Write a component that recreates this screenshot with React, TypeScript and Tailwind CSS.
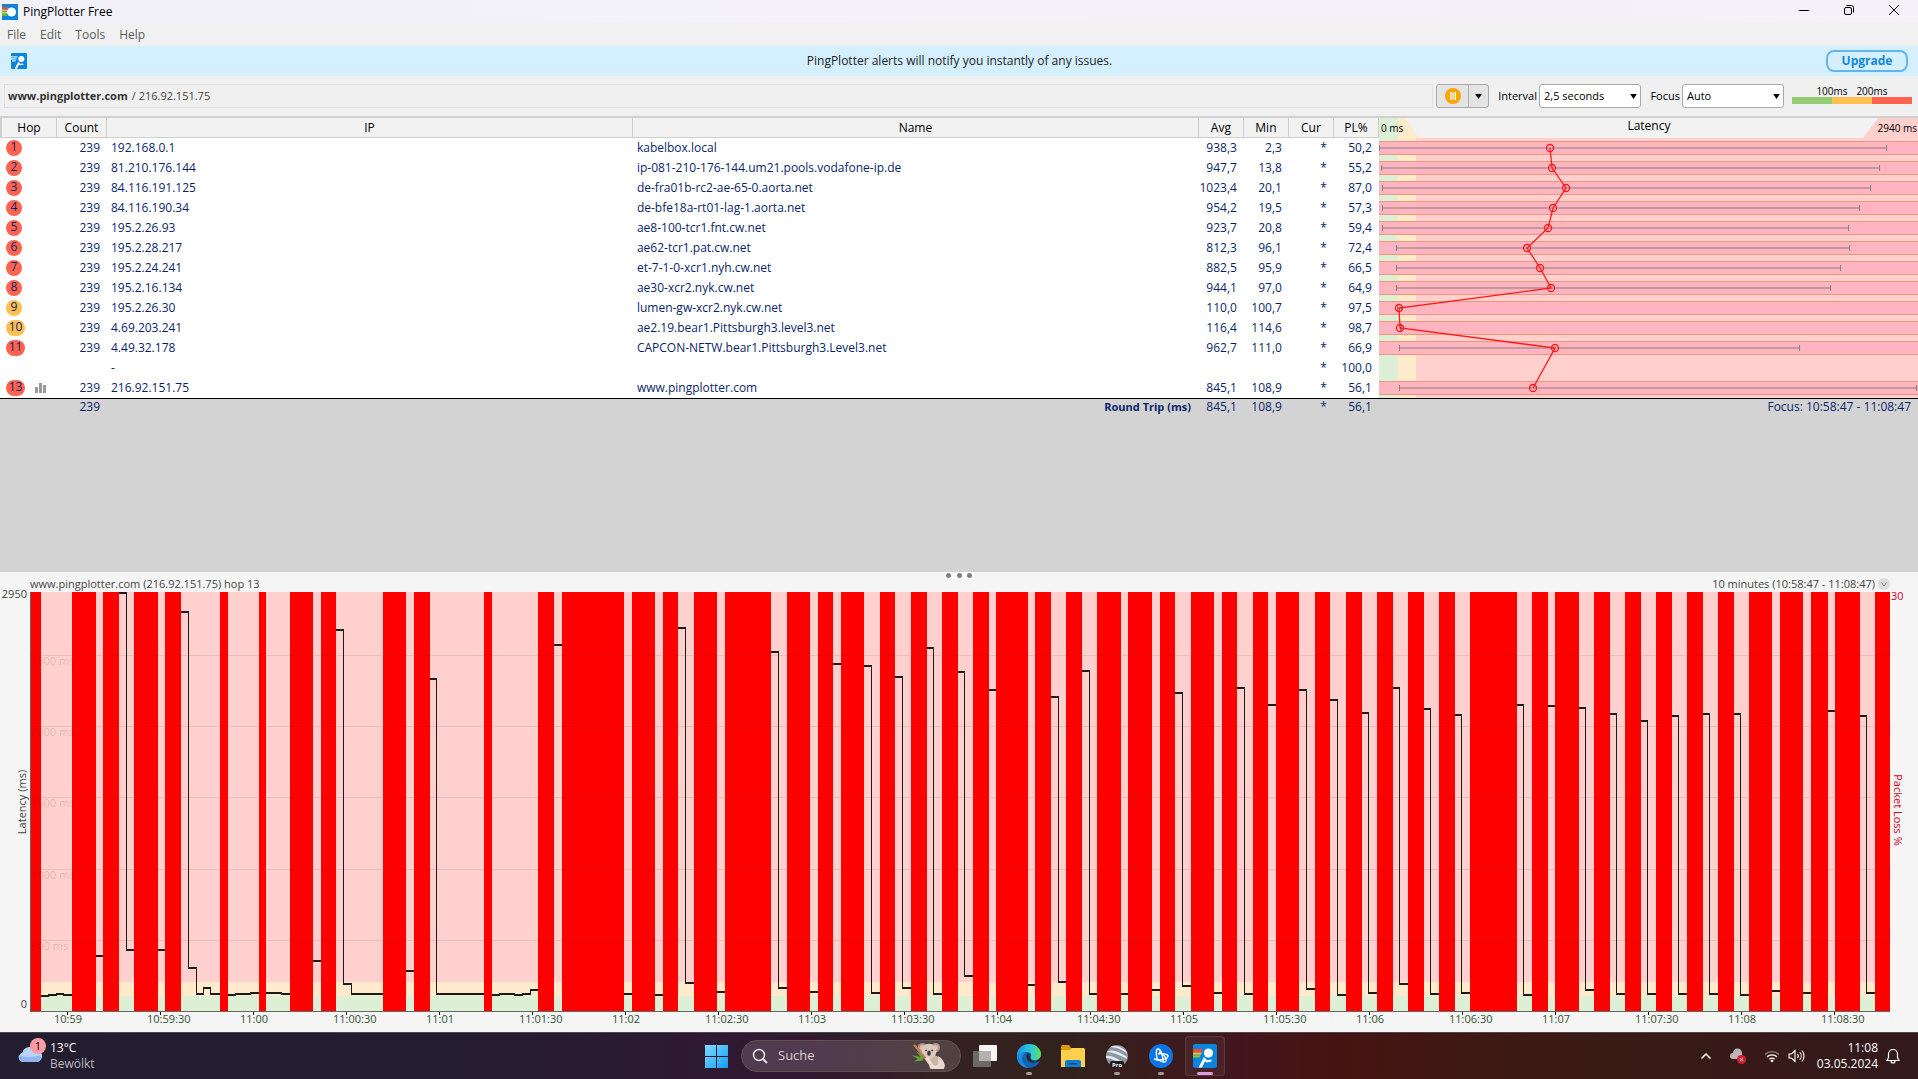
import React from "react";
import clsx from "clsx";

interface Hop {
  hop: number | null;
  count?: number;
  ip: string;
  name?: string;
  avg?: string;
  min?: string;
  loss: string;
  warn?: boolean;
  active?: boolean;
  // graph positions, in pixels of the latency column
  lo?: number;
  hi?: number;
  mid?: number;
}

const HOPS: Hop[] = [
  { hop: 1, count: 239, ip: "192.168.0.1", name: "kabelbox.local", avg: "938,3", min: "2,3", loss: "50,2", lo: 0, hi: 507, mid: 171 },
  { hop: 2, count: 239, ip: "81.210.176.144", name: "ip-081-210-176-144.um21.pools.vodafone-ip.de", avg: "947,7", min: "13,8", loss: "55,2", lo: 2, hi: 500, mid: 173 },
  { hop: 3, count: 239, ip: "84.116.191.125", name: "de-fra01b-rc2-ae-65-0.aorta.net", avg: "1023,4", min: "20,1", loss: "87,0", lo: 3, hi: 491, mid: 187 },
  { hop: 4, count: 239, ip: "84.116.190.34", name: "de-bfe18a-rt01-lag-1.aorta.net", avg: "954,2", min: "19,5", loss: "57,3", lo: 3, hi: 480, mid: 174 },
  { hop: 5, count: 239, ip: "195.2.26.93", name: "ae8-100-tcr1.fnt.cw.net", avg: "923,7", min: "20,8", loss: "59,4", lo: 3, hi: 469, mid: 169 },
  { hop: 6, count: 239, ip: "195.2.28.217", name: "ae62-tcr1.pat.cw.net", avg: "812,3", min: "96,1", loss: "72,4", lo: 17, hi: 470, mid: 148 },
  { hop: 7, count: 239, ip: "195.2.24.241", name: "et-7-1-0-xcr1.nyh.cw.net", avg: "882,5", min: "95,9", loss: "66,5", lo: 17, hi: 461, mid: 161 },
  { hop: 8, count: 239, ip: "195.2.16.134", name: "ae30-xcr2.nyk.cw.net", avg: "944,1", min: "97,0", loss: "64,9", lo: 17, hi: 451, mid: 172 },
  { hop: 9, count: 239, ip: "195.2.26.30", name: "lumen-gw-xcr2.nyk.cw.net", avg: "110,0", min: "100,7", loss: "97,5", warn: true, lo: 18, hi: 22, mid: 20 },
  { hop: 10, count: 239, ip: "4.69.203.241", name: "ae2.19.bear1.Pittsburgh3.level3.net", avg: "116,4", min: "114,6", loss: "98,7", warn: true, lo: 21, hi: 22, mid: 21 },
  { hop: 11, count: 239, ip: "4.49.32.178", name: "CAPCON-NETW.bear1.Pittsburgh3.Level3.net", avg: "962,7", min: "111,0", loss: "66,9", lo: 20, hi: 420, mid: 176 },
  { hop: null, ip: "-", loss: "100,0" },
  { hop: 13, count: 239, ip: "216.92.151.75", name: "www.pingplotter.com", avg: "845,1", min: "108,9", loss: "56,1", active: true, lo: 20, hi: 537, mid: 154 },
];

// packet loss periods: [start, end]
const LOSS: [number, number][] = [
  [31, 41], [72, 96], [103, 119], [134, 158], [165, 181], [220, 228], [259, 266], [290, 313], [321, 336],
  [383, 406], [414, 430], [484, 492], [538, 554], [562, 624], [632, 655], [663, 678], [694, 717], [725, 771],
  [787, 810], [818, 833], [841, 864], [880, 895], [911, 927], [942, 958], [973, 989], [996, 1028], [1035, 1051],
  [1066, 1082], [1097, 1121], [1128, 1152], [1160, 1175], [1191, 1214], [1222, 1237], [1253, 1268], [1276, 1299],
  [1315, 1330], [1346, 1362], [1377, 1393], [1408, 1424], [1439, 1455], [1470, 1517], [1532, 1548], [1555, 1579],
  [1594, 1610], [1625, 1641], [1656, 1672], [1687, 1703], [1718, 1734], [1749, 1772], [1780, 1803], [1811, 1828],
  [1835, 1860], [1875, 1890],
];

// runs of answered samples: start x, then [end x, y] for every step
const RUNS: [number, [number, number][]][] = [
  [41, [[49, 404], [57, 403], [64, 402], [72, 403]]],
  [96, [[103, 364]]],
  [119, [[127, 1], [134, 358]]],
  [158, [[165, 358]]],
  [181, [[189, 20], [197, 376], [204, 402], [211, 396], [220, 402]]],
  [228, [[236, 403], [251, 402], [259, 401]]],
  [266, [[282, 401], [290, 402]]],
  [313, [[321, 369]]],
  [336, [[344, 38], [352, 392], [383, 402]]],
  [406, [[414, 379]]],
  [430, [[437, 87], [484, 402]]],
  [492, [[500, 403], [515, 402], [523, 403], [531, 402], [538, 398]]],
  [554, [[562, 53]]],
  [624, [[632, 402]]],
  [655, [[663, 403]]],
  [678, [[686, 36], [694, 391]]],
  [717, [[725, 400]]],
  [771, [[779, 60], [787, 396]]],
  [810, [[818, 400]]],
  [833, [[841, 72]]],
  [864, [[872, 74], [880, 401]]],
  [895, [[903, 85], [911, 396]]],
  [927, [[934, 56], [942, 402]]],
  [958, [[965, 80], [973, 384]]],
  [989, [[996, 98]]],
  [1028, [[1035, 393]]],
  [1051, [[1059, 105], [1066, 390]]],
  [1082, [[1090, 79], [1097, 402]]],
  [1121, [[1128, 402]]],
  [1152, [[1160, 398]]],
  [1175, [[1183, 101], [1191, 394]]],
  [1214, [[1222, 401]]],
  [1237, [[1245, 96], [1253, 402]]],
  [1268, [[1276, 113]]],
  [1299, [[1307, 98], [1315, 397]]],
  [1330, [[1338, 108], [1346, 403]]],
  [1362, [[1369, 121], [1377, 401]]],
  [1393, [[1400, 96], [1408, 392]]],
  [1424, [[1431, 117], [1439, 402]]],
  [1455, [[1462, 123], [1470, 401]]],
  [1517, [[1524, 113], [1532, 403]]],
  [1548, [[1555, 114]]],
  [1579, [[1586, 116], [1594, 398]]],
  [1610, [[1617, 122], [1625, 402]]],
  [1641, [[1648, 129], [1656, 402]]],
  [1672, [[1679, 124], [1687, 402]]],
  [1703, [[1710, 122], [1718, 402]]],
  [1734, [[1741, 122], [1749, 403]]],
  [1772, [[1780, 399]]],
  [1803, [[1811, 401]]],
  [1828, [[1835, 119]]],
  [1860, [[1867, 124], [1875, 401]]],
];

const GRID = [
  { label: "2500 ms", y: 63 },
  { label: "2000 ms", y: 134 },
  { label: "1500 ms", y: 205 },
  { label: "1000 ms", y: 277 },
  { label: "500 ms", y: 348 },
];

const TIMES = [
  "10:59", "10:59:30", "11:00", "11:00:30", "11:01", "11:01:30", "11:02", "11:02:30", "11:03", "11:03:30",
  "11:04", "11:04:30", "11:05", "11:05:30", "11:06", "11:06:30", "11:07", "11:07:30", "11:08", "11:08:30",
];

function PlotterIcon({ className, stripes }: { className?: string; stripes?: boolean }) {
  return (
    <svg viewBox="0 0 24 24" className={className} aria-hidden="true">
      <rect width="24" height="24" rx="2" fill="#0a84dc" />
      {stripes ? (
        <>
          <path d="M0 5h10l-1 3H0z" fill="#ef4a36" />
          <path d="M0 8.5h8.5l-.7 2.3H0z" fill="#ffb52e" />
          <path d="M0 11.3h7.5l-1.2 2.2H0z" fill="#7ecb2b" />
        </>
      ) : (
        <path d="M0 5h10l-.6 1.6H0zM0 8h8.5l-.6 1.6H0zM1.5 11h6l-.8 1.6H1.5z" fill="#d5f0ff" />
      )}
      <circle cx="15.5" cy="9" r="4.6" fill="#fff" />
      <path d="M11 13l3 3.2 4.5-.6v2l-5 .8-1.5-1.2L9 23.5H5.5z" fill="#fff" />
    </svg>
  );
}

function TitleBar() {
  return (
    <header className="flex h-[23px] items-center justify-between bg-linear-to-r from-[#f1f1f9] to-[#f6f0f8]">
      <div className="flex items-center gap-[5px] pl-0.5">
        <svg viewBox="0 0 16 16" className="size-4" aria-hidden="true">
          <rect width="16" height="16" fill="#0a84dc" />
          <path d="M0 3h6v2H0z" fill="#ef4a36" />
          <path d="M0 5.5h5v2H0z" fill="#ffb52e" />
          <path d="M0 8h5v1.5H0z" fill="#d9e02b" />
          <path d="M0 10h5v2H0z" fill="#5bbf3a" />
          <circle cx="9.5" cy="8" r="4.6" fill="#fff" />
        </svg>
        <h1 className="text-xs text-black">PingPlotter Free</h1>
      </div>
      <div className="flex h-full items-start pr-0.5">
        <button aria-label="Minimize" className="flex h-5 w-[45px] items-center justify-center">
          <svg viewBox="0 0 12 12" className="size-3"><path d="M1 6.5h10" stroke="#000" fill="none" /></svg>
        </button>
        <button aria-label="Restore" className="flex h-5 w-[45px] items-center justify-center">
          <svg viewBox="0 0 12 12" className="size-3" fill="none" stroke="#000">
            <rect x="1.5" y="3.5" width="7" height="7" rx="1.5" />
            <path d="M3.5 1.5h5a2 2 0 0 1 2 2v5" />
          </svg>
        </button>
        <button aria-label="Close" className="flex h-5 w-[45px] items-center justify-center">
          <svg viewBox="0 0 12 12" className="size-3"><path d="M1 1l10 10M11 1L1 11" stroke="#000" fill="none" /></svg>
        </button>
      </div>
    </header>
  );
}

function Dropdown({ id, label, options }: { id: string; label: string; options: string[] }) {
  return (
    <div className="flex items-center gap-0.5 text-[11px] text-black">
      <label htmlFor={id} className="w-[39px] text-right">{label}</label>
      <div className="relative">
        <select id={id} className="h-6 w-[102px] appearance-none rounded-[3px] border border-[#aaa] bg-white pl-1">
          {options.map((o) => <option key={o}>{o}</option>)}
        </select>
        <svg viewBox="0 0 8 6" className="pointer-events-none absolute top-[10px] right-1 h-[5px] w-[7px]">
          <path d="M0 0h8L4 6z" fill="#000" />
        </svg>
      </div>
    </div>
  );
}

function Toolbar() {
  return (
    <div className="flex h-10 items-center bg-[#f0f0f0] pr-1.5 pl-1">
      <div className="flex h-6 flex-1 items-center gap-1 border border-[#e0e0e0] pl-[3px] text-[11px] text-[#444]">
        <b className="text-[#333]">www.pingplotter.com</b>
        <span>/ 216.92.151.75</span>
      </div>
      <div className="ml-[3px] flex h-6 w-[53px] rounded-[3px] border border-[#aaa] bg-[#e4e4e4]">
        <button aria-label="Pause" className="flex w-8 items-center justify-center border-r border-[#aaa]">
          <svg viewBox="0 0 16 16" className="size-4">
            <circle cx="8" cy="8" r="8" fill="#ffa500" />
            <path d="M5.5 4.5h1.5v7H5.5zM9 4.5h1.5v7H9z" fill="none" stroke="#fff" />
          </svg>
        </button>
        <button aria-label="Trace options" className="flex flex-1 items-center justify-center">
          <svg viewBox="0 0 8 6" className="h-[5px] w-[7px]"><path d="M0 0h8L4 6z" fill="#000" /></svg>
        </button>
      </div>
      <div className="ml-[9px] flex">
        <Dropdown id="interval" label="Interval" options={["2,5 seconds", "5 seconds"]} />
        <Dropdown id="focus" label="Focus" options={["Auto", "10 minutes"]} />
      </div>
      <div className="ml-2 w-[120px] pb-1">
        <div className="flex justify-center text-[10px] leading-3 text-black">
          <span className="w-10 text-center">100ms</span>
          <span className="w-10 text-center">200ms</span>
        </div>
        <div className="flex h-[7px]">
          <div className="flex-1 bg-[#95cb73]" />
          <div className="flex-1 bg-[#ffc04f]" />
          <div className="flex-1 bg-[#ff6450]" />
        </div>
      </div>
    </div>
  );
}

function LatencyGraph() {
  const points = HOPS.map((h, i) => ({ ...h, y: 10 + i * 20 })).filter((h) => h.mid !== undefined);
  return (
    <svg viewBox="0 0 539 260" preserveAspectRatio="none" className="block h-[260px] w-full">
      <rect width="539" height="260" fill="#ffd0cd" />
      <rect width="19" height="260" fill="#ddefd5" />
      <rect x="19" width="18" height="260" fill="#ffeacb" />
      {points.map((p) => (
        <g key={p.hop}>
          <rect y={p.y - 7} width="539" height="14" fill="#e9967a" />
          <rect y={p.y - 6} width="539" height="12" fill="#ffb5c0" />
          <rect x={p.lo} y={p.y - 1} width={p.hi! - p.lo!} height="2" fill="#c09a9f" />
          <rect x={p.lo} y={p.y - 3} width="1" height="6" fill="#808080" />
          <rect x={p.hi} y={p.y - 3} width="1" height="6" fill="#808080" />
        </g>
      ))}
      <polyline points={points.map((p) => `${p.mid},${p.y}`).join(" ")} fill="none" stroke="#ff1a1a" strokeWidth="1.3" />
      {points.map((p) => (
        <circle key={p.hop} cx={p.mid} cy={p.y} r="3.5" fill="none" stroke="#ff1a1a" strokeWidth="1.3" />
      ))}
    </svg>
  );
}

function HopTable() {
  const th = "h-5 border-r border-b border-[#cfcfcf] bg-[#f2f2f2] p-0 text-center font-normal text-black";
  return (
    <table className="w-full table-fixed border-separate border-spacing-0 border-t-2 border-[#d0d0d0] leading-4 text-[#0a1f6b]">
      <colgroup>
        <col className="w-[57px]" />
        <col className="w-[50px]" />
        <col className="w-[27.42%]" />
        <col className="w-[29.51%]" />
        <col className="w-[45px]" />
        <col className="w-[45px]" />
        <col className="w-[45px]" />
        <col className="w-[45px]" />
        <col />
      </colgroup>
      <thead>
        <tr>
          {["Hop", "Count", "IP", "Name", "Avg", "Min", "Cur", "PL%"].map((c) => (
            <th key={c} scope="col" className={clsx(th, c === "Hop" && "border-l-2")}>{c}</th>
          ))}
          <th scope="col" className="relative h-5 bg-[#f2f2f2] p-0 font-normal text-black">
            <svg viewBox="0 0 539 20" preserveAspectRatio="none" className="absolute inset-0 h-full w-full" aria-hidden="true">
              <rect width="19" height="20" fill="#ddefd5" />
              <path d="M19 0h7l14 20H19z" fill="#ffeacb" />
              <path d="M499 0h40v20h-55z" fill="#ffd0cd" />
            </svg>
            <div className="relative flex h-5 items-start justify-between pr-px pl-0.5">
              <span className="w-12 text-left text-[10px] leading-5">0 ms</span>
              <span className="leading-4">Latency</span>
              <span className="w-12 text-right text-[10px] leading-5">2940 ms</span>
            </div>
          </th>
        </tr>
      </thead>
      <tbody className="bg-white">
        {HOPS.map((h, i) => (
          <tr key={i} className="h-5">
            <td className="h-5 p-0 pl-1.5">
              <div className="flex items-center gap-2.5">
                {h.hop !== null && (
                  <span
                    className={clsx(
                      "flex h-4 items-center justify-center rounded-full pb-0.5",
                      h.hop > 9 ? "w-[19px]" : "w-4",
                      h.warn ? "bg-[#ffc04f]" : "bg-[#ff6450]"
                    )}
                  >
                    {h.hop}
                  </span>
                )}
                {h.active && (
                  <svg viewBox="0 0 11 10" className="h-2.5 w-[11px]" aria-hidden="true">
                    <path d="M0 4h3v6H0zM4 0h3v10H4zM8 2h3v8H8z" fill="#999" />
                  </svg>
                )}
              </div>
            </td>
            <td className="p-0 pr-[7px] text-right">{h.count}</td>
            <td className="p-0 pl-1">{h.ip}</td>
            <td className="p-0 pl-1">{h.name}</td>
            <td className="p-0 pr-[7px] text-right">{h.avg}</td>
            <td className="p-0 pr-[7px] text-right">{h.min}</td>
            <td className="p-0 pr-[7px] text-right">*</td>
            <td className="p-0 pr-[7px] text-right">{h.loss}</td>
            {i === 0 && (
              <td rowSpan={13} className="p-0"><LatencyGraph /></td>
            )}
          </tr>
        ))}
      </tbody>
      <tfoot>
        <tr>
          <td className="border-t border-black p-0" />
          <td className="border-t border-black p-0 pr-[7px] text-right">239</td>
          <td className="border-t border-black p-0" />
          <td className="border-t border-black p-0 pr-2 text-right text-[11px] font-bold">Round Trip (ms)</td>
          <td className="border-t border-black p-0 pr-[7px] text-right">845,1</td>
          <td className="border-t border-black p-0 pr-[7px] text-right">108,9</td>
          <td className="border-t border-black p-0 pr-[7px] text-right">*</td>
          <td className="border-t border-black p-0 pr-[7px] text-right">56,1</td>
          <td className="border-t border-black p-0 pr-[7px] text-right">Focus: 10:58:47 - 11:08:47</td>
        </tr>
      </tfoot>
    </table>
  );
}

function Timeline() {
  return (
    <section className="bg-[#f5f5f5] text-[11px] text-[#444]">
      <div className="relative flex h-5 items-end justify-between pr-7 pl-[30px] leading-4">
        <h2>www.pingplotter.com (216.92.151.75) hop 13</h2>
        <div className="absolute top-0 left-1/2 flex h-[7px] w-[30px] -translate-x-1/2 items-center justify-between bg-white px-0.5">
          <i className="size-[5px] rounded-full bg-[#808080]" />
          <i className="size-[5px] rounded-full bg-[#808080]" />
          <i className="size-[5px] rounded-full bg-[#808080]" />
        </div>
        <div className="flex items-center gap-[3px]">
          <span>10 minutes (10:58:47 - 11:08:47)</span>
          <button aria-label="Choose time range" className="flex size-3 items-center justify-center rounded-full bg-[#dcdcdc]">
            <svg viewBox="0 0 8 8" className="size-2"><path d="M1.5 2.5L4 6l2.5-3.5" fill="none" stroke="#888" /></svg>
          </button>
        </div>
      </div>

      <div className="flex h-[420px]">
        <div className="relative w-[30px]">
          <span className="absolute top-[-6px] right-[3px] leading-4">2950</span>
          <span className="absolute right-[3px] bottom-0 leading-4">0</span>
          <span className="absolute top-1/2 left-[14px] -translate-y-1/2 rotate-180 leading-4 whitespace-nowrap [writing-mode:vertical-rl]">
            Latency (ms)
          </span>
        </div>
        <div className="relative flex-1 border-b border-l border-[#666]">
          <svg viewBox="31 0 1859 419" preserveAspectRatio="none" shapeRendering="crispEdges" className="absolute inset-0 h-full w-full">
            <rect x="31" width="1859" height="419" fill="#ffd0cd" />
            <rect x="31" y="390" width="1859" height="14" fill="#ffeacb" />
            <rect x="31" y="404" width="1859" height="15" fill="#ddefd5" />
            {LOSS.map(([a, b]) => (
              <rect key={a} x={a} width={b - a} height="419" fill="#f00" />
            ))}
            {GRID.map((g) => (
              <rect key={g.y} x="31" y={g.y} width="1859" height="1" fill="#000" fillOpacity="0.09" />
            ))}
            {RUNS.map(([start, steps]) =>
              steps.map(([end, y], i) => {
                const from = i === 0 ? start : steps[i - 1][0];
                const prev = i === 0 ? y : steps[i - 1][1];
                return (
                  <g key={end} fill="#1a1a1a">
                    <rect x={from} y={y - 1} width={end - from} height="2" />
                    {prev !== y && (
                      <rect x={from - 1} y={Math.min(prev, y) - 1} width="1" height={Math.abs(prev - y) + 2} />
                    )}
                  </g>
                );
              })
            )}
          </svg>
          {GRID.map((g) => (
            <span key={g.y} className="absolute left-0 leading-4 text-black/15" style={{ top: g.y - 2 }}>{g.label}</span>
          ))}
        </div>
        <div className="relative w-7 text-[#d0021b]">
          <span className="absolute top-[-4px] left-px leading-4">30</span>
          <span className="absolute top-[52%] left-0 -translate-y-1/2 leading-4 whitespace-nowrap [writing-mode:vertical-rl]">
            Packet Loss %
          </span>
        </div>
      </div>

      <div className="relative mr-7 ml-[31px] h-5 text-[#2f5230]">
        {TIMES.map((t, i) => (
          <div key={t} className="absolute top-0 -ml-[13px]" style={{ left: `${((36 + i * 93) / 1859) * 100}%` }}>
            <i className="ml-[13px] block h-[3px] w-px bg-black" />
            <span className="block leading-[7px]">{t}</span>
          </div>
        ))}
      </div>
    </section>
  );
}

function Koala() {
  return (
    <svg viewBox="0 0 38 30" className="h-[28px] w-[38px]" aria-hidden="true">
      <path d="M0 14l10 2-5-6 9 5-2 5-9 1 4-3z" fill="#5da53a" />
      <path d="M17 14c8-3 17 4 19 11l-2 4H20z" fill="#c9b3a4" />
      <path d="M29 15c6 4 8 10 6 14h-7z" fill="#e9d8c8" />
      <circle cx="12" cy="6" r="5" fill="#a8948c" />
      <circle cx="12" cy="6" r="3" fill="#e2b7a6" />
      <circle cx="26" cy="6" r="5" fill="#a8948c" />
      <circle cx="26" cy="6" r="3" fill="#e2b7a6" />
      <ellipse cx="19" cy="10" rx="8" ry="8" fill="#d9cac0" />
      <circle cx="16" cy="9" r="1" fill="#222" />
      <circle cx="22.5" cy="9" r="1" fill="#222" />
      <ellipse cx="19" cy="12" rx="2" ry="2.8" fill="#4a3440" />
      <path d="M3 3l20 24" stroke="#c67c50" strokeWidth="2.5" />
      <path d="M17 18l6 9M24 27h8" stroke="#eadcd0" strokeWidth="4" strokeLinecap="round" />
    </svg>
  );
}

function TaskButton({ label, running, children }: { label: string; running?: boolean; children: React.ReactNode }) {
  return (
    <button aria-label={label} className="relative flex h-full w-11 items-center justify-center">
      {children}
      {running && <i className="absolute bottom-1 left-[19px] h-[3px] w-1.5 rounded-full bg-[#a59a9c]" />}
    </button>
  );
}

function Taskbar() {
  return (
    <footer className="grid h-[47px] grid-cols-[1fr_auto_1fr] border-t border-[#4b484d] bg-[linear-gradient(90deg,#231d30_0%,#241c31_24%,#321931_42%,#33221f_50%,#32221d_56%,#43151c_65%,#451411_70%,#3b1a13_80%,#33191b_100%)] text-xs text-white">
      <div className="flex items-center gap-2 pl-[18px]">
        <div className="relative mt-[5px] h-6 w-6 self-start">
          <svg viewBox="0 0 24 16" className="absolute bottom-0 left-0 h-4 w-6" aria-hidden="true">
            <path d="M5 16a5 5 0 0 1-.5-9.5A7 7 0 0 1 17 4a6 6 0 0 1 2 12z" fill="#b9d4f8" />
            <path d="M5 16a5 5 0 0 1-4-7c5 3 14 3 21 0 3 4-1 7-3 7z" fill="#8fb6f0" />
          </svg>
          <span className="absolute top-0 left-3 flex size-4 items-center justify-center rounded-full bg-[#ff9ba5] text-[11px] text-black">1</span>
        </div>
        <div className="leading-4">
          <p>13°C</p>
          <p className="text-[#b9b5bd]">Bewölkt</p>
        </div>
      </div>

      <div className="flex items-center pl-3">
        <button aria-label="Start" className="mr-[13px] size-[23px]">
          <svg viewBox="0 0 23 23">
            <defs>
              <linearGradient id="win" x1="0" y1="0" x2="1" y2="1">
                <stop offset="0" stopColor="#7fdcff" />
                <stop offset="1" stopColor="#119cf5" />
              </linearGradient>
            </defs>
            <path d="M0 0h11v11H0zM12 0h11v11H12zM0 12h11v11H0zM12 12h11v11H12z" fill="url(#win)" />
          </svg>
        </button>
        <label className="flex h-8 w-[220px] items-center gap-2.5 rounded-full border border-[#62504f] bg-white/15 pr-3 pl-2.5">
          <svg viewBox="0 0 16 16" className="size-4 shrink-0" fill="none" stroke="#e8e3e6" strokeWidth="1.5">
            <circle cx="7" cy="7" r="5.5" />
            <path d="M11 11l4 4" strokeWidth="2" />
          </svg>
          <input aria-label="Search" placeholder="Suche" className="w-full min-w-0 flex-1 bg-transparent text-[13px] outline-none placeholder:text-[#d8cfd1]" />
          <Koala />
        </label>
        <div className="ml-0.5 flex h-full">
          <TaskButton label="Task view">
            <svg viewBox="0 0 24 24" className="size-6">
              <rect x="0" y="7" width="18" height="16" rx="1" fill="#6c6a69" />
              <rect x="6" y="1" width="18" height="16" rx="1" fill="#f4f4f4" />
              <path d="M6 7h12v10H6z" fill="#b4b2b1" />
            </svg>
          </TaskButton>
          <TaskButton label="Edge" running>
            <svg viewBox="0 0 24 24" className="size-6">
              <defs>
                <linearGradient id="edgeTop" x1="0" x2="1">
                  <stop offset="0.1" stopColor="#1e9be8" />
                  <stop offset="0.6" stopColor="#2fc8d8" />
                  <stop offset="1" stopColor="#5fe04f" />
                </linearGradient>
              </defs>
              <path d="M0 12C0 4 6 0 12 0c7 0 12 5 12 10 0 4-3 7-6 7 1 1 3 1 5 0-2 4-6 7-11 7C5 24 0 18 0 12z" fill="#0f62b4" />
              <path d="M0 12C0 4 6 0 12 0c7 0 12 5 12 10 0 4-3 6-6 6-4 0-5-2-4-3 1-2 0-5-4-5-5 0-9 2-10 7z" fill="url(#edgeTop)" />
              <path d="M10 8c-6 1-7 12 2 16C4 24 0 18 0 13c2-4 6-5 10-5z" fill="#1b8be0" />
              <path d="M13 13c0 3 4 6 9 4-3 2-10 3-12-2-1-2 0-5 1-6 2 1 2 2 2 4z" fill="#33221f" />
            </svg>
          </TaskButton>
          <TaskButton label="Explorer">
            <svg viewBox="0 0 24 24" className="size-6">
              <path d="M0 3a2 2 0 0 1 2-2h6l2 3h12a2 2 0 0 1 2 2v4H0z" fill="#e19a07" />
              <path d="M0 6h9l2-2h11a2 2 0 0 1 2 2v17H0z" fill="#ffd04d" />
              <path d="M4 23v-5a2 2 0 0 1 2-2h12a2 2 0 0 1 2 2v5z" fill="#117ccd" />
              <path d="M8 19h8v1.5H8z" fill="#0b4f8d" />
            </svg>
          </TaskButton>
          <TaskButton label="Earth Pro" running>
            <svg viewBox="0 0 24 24" className="size-6">
              <circle cx="12" cy="12" r="11" fill="#8d97a3" />
              <path d="M2 8c5-4 14 1 20 5v2C15 11 7 8 2 8zM5 3.5c6-1 13 3 17 6l-1-2.5C17 3 9 0 5 3.5zM1 12c6-1 12 3 18 8l-2 1C12 17 6 14 1 14z" fill="#e9edf0" />
              <rect x="5" y="17" width="14" height="7" rx="2" fill="#1c1c1c" />
              <text x="12" y="22.5" textAnchor="middle" fontSize="6" fontWeight="bold" fill="#fff">Pro</text>
            </svg>
          </TaskButton>
          <TaskButton label="Battle.net" running>
            <svg viewBox="0 0 24 24" className="size-6" fill="none" stroke="#fff" strokeWidth="1.4">
              <circle cx="12" cy="12" r="12" fill="#0a76e6" stroke="none" />
              <path d="M9 17C6.5 11 7 5 9 5c2.5 0 5 6 5 12" />
              <path d="M5 15c6 2 14 0 14-3 0-2-6-3-10-2" />
              <path d="M10 8c5 2 8 6 7 9-1 2-5 1-8-2" />
            </svg>
          </TaskButton>
          <button aria-label="PingPlotter" className="relative my-[3px] ml-0.5 flex w-10 items-center justify-center rounded border border-white/10 bg-white/5">
            <PlotterIcon className="size-6" stripes />
            <i className="absolute bottom-0 h-[3px] w-4 rounded-full bg-[#dc9ce0]" />
          </button>
        </div>
      </div>

      <div className="flex items-center justify-end pr-[18px]">
        <button aria-label="Hidden icons" className="mr-[18px]">
          <svg viewBox="0 0 12 12" className="size-3"><path d="M1.5 8.5L6 4l4.5 4.5" fill="none" stroke="#fff" strokeWidth="1.5" /></svg>
        </button>
        <svg viewBox="0 0 16 16" className="mr-[18px] size-4" role="img" aria-label="Cloud sync error">
          <path d="M3 11a3 3 0 0 1 0-6 4.5 4.5 0 0 1 9 0v6z" fill="#bdb6b6" />
          <circle cx="11.5" cy="11.5" r="4.5" fill="#d81e2c" />
          <path d="M10 10l3 3M13 10l-3 3" stroke="#fff" />
        </svg>
        <svg viewBox="0 0 16 16" className="mr-2 size-4" fill="none" stroke="#fff" strokeWidth="1.2" role="img" aria-label="Wi-Fi">
          <path d="M1 6.5a10 10 0 0 1 14 0" stroke="#8d7b7b" />
          <path d="M3 9a7 7 0 0 1 10 0M5.3 11.3a4 4 0 0 1 5.4 0" />
          <circle cx="8" cy="13" r="1.3" fill="#fff" stroke="none" />
        </svg>
        <svg viewBox="0 0 17 16" className="mr-3 h-4 w-[17px]" fill="none" stroke="#fff" strokeWidth="1.1" role="img" aria-label="Volume">
          <path d="M1 6h2.5L7 2.5v11L3.5 10H1zM9.5 6a3 3 0 0 1 0 4M11.7 4a6 6 0 0 1 0 8M14 2.5a8.5 8.5 0 0 1 0 11" />
        </svg>
        <div className="mr-2 text-right leading-4">
          <p>11:08</p>
          <p>03.05.2024</p>
        </div>
        <button aria-label="Notifications">
          <svg viewBox="0 0 14 16" className="h-4 w-3.5" fill="none" stroke="#fff" strokeWidth="1.2">
            <path d="M1 12.5l1.5-3V6a4.5 4.5 0 0 1 9 0v3.5l1.5 3zM5 13a2 2 0 0 0 4 0" />
          </svg>
        </button>
      </div>
    </footer>
  );
}

export default function App() {
  return (
    <div className="flex min-h-screen flex-col bg-[#d3d3d3] font-['Open_Sans','Noto_Sans',sans-serif] text-xs">
      <TitleBar />
      <nav className="flex h-[23px] items-center gap-3.5 bg-[#f1f1f1] pl-[7px] text-[#5c5c5c]">
        <button>File</button>
        <button>Edit</button>
        <button>Tools</button>
        <button>Help</button>
      </nav>

      {/* Promo bar */}
      <div className="grid h-[30px] grid-cols-[1fr_auto_1fr] items-center bg-[#d4f0ff] pr-[10px] pl-[11px] text-[#222]">
        <PlotterIcon className="size-4" />
        <p>PingPlotter alerts will notify you instantly of any issues.</p>
        <button className="h-[22px] w-[82px] justify-self-end rounded-lg border-2 border-[#65b5ec] font-bold text-[#1286dc]">Upgrade</button>
      </div>

      <Toolbar />
      <main className="flex flex-1 flex-col">
        <HopTable />
        <div className="flex-1" />
        <Timeline />
      </main>
      <Taskbar />
    </div>
  );
}
